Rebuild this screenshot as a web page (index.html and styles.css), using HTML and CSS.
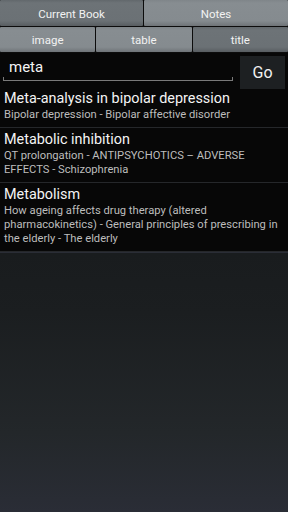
FILE: index.html
```html
<!DOCTYPE html>
<html>
<head>
<meta charset="utf-8">
<link rel="stylesheet" href="styles.css">
</head>
<body>
<div class="app">
  <div class="tabs tabs-top">
    <div class="tab dark">Current Book</div>
    <div class="tab">Notes</div>
  </div>
  <div class="tabs tabs-second">
    <div class="tab">image</div>
    <div class="tab">table</div>
    <div class="tab dark">title</div>
  </div>
  <div class="search">
    <div class="field"><span class="query">meta</span></div>
    <div class="go">Go</div>
  </div>
  <div class="list">
    <div class="item">
      <div class="title">Meta-analysis in bipolar depression</div>
      <div class="sub">Bipolar depression - Bipolar affective disorder</div>
    </div>
    <div class="item">
      <div class="title">Metabolic inhibition</div>
      <div class="sub">QT prolongation - ANTIPSYCHOTICS – ADVERSE EFFECTS - Schizophrenia</div>
    </div>
    <div class="item">
      <div class="title">Metabolism</div>
      <div class="sub">How ageing affects drug therapy (altered pharmacokinetics) - General principles of prescribing in the elderly - The elderly</div>
    </div>
  </div>
</div>
</body>
</html>
```
FILE: styles.css
```css
html, body {
  margin: 0;
  padding: 0;
}
body {
  width: 288px;
  height: 512px;
  overflow: hidden;
  font-family: Roboto, "Liberation Sans", sans-serif;
  background: linear-gradient(to bottom, #191c1e 0px, #1b1e20 60px, #23272a 180px, #2a2d36 259px);
  background-color: #2a2d36;
  background-repeat: no-repeat;
  background-position: 0 253px;
  background-size: 288px 259px;
}
.app {
  width: 288px;
}
.tabs {
  display: flex;
  gap: 1px;
  background: #0c0c0c;
}
.tabs-top {
  height: 26px;
  padding-bottom: 1px;
}
.tabs-second {
  height: 25px;
  padding-bottom: 1px;
}
.tab {
  flex: 1;
  display: flex;
  align-items: center;
  justify-content: center;
  padding-top: 1px;
  color: #f2f2f2;
  font-size: 11.5px;
  background: linear-gradient(to bottom, #7f8589 0px, #878d91 3px, #858b8f 80%, #6f7478 100%);
  border-radius: 1px;
}
.tab.dark {
  background: linear-gradient(to bottom, #62686c 0px, #6d7377 3px, #6b7175 80%, #585d61 100%);
}
.tabs-top .tab:first-child {
  flex: 0 0 143px;
}
.search {
  height: 34px;
  display: flex;
  align-items: flex-start;
  background: #070707;
}
.field {
  width: 230px;
  margin-left: 3px;
  height: 27px;
  border-bottom: 1px solid #7a7a7a;
  position: relative;
  display: flex;
  align-items: flex-end;
}
.field::before,
.field::after {
  content: "";
  position: absolute;
  bottom: 0;
  width: 1px;
  height: 3px;
  background: #7a7a7a;
}
.field::before { left: 0; }
.field::after { right: 0; }
.query {
  color: #f4f4f4;
  font-size: 15px;
  line-height: 18px;
  padding-left: 6px;
  padding-bottom: 4px;
}
.go {
  margin-left: 7px;
  margin-top: 3px;
  width: 45px;
  height: 33px;
  background: #1d2022;
  color: #f2f2f2;
  font-size: 16px;
  display: flex;
  align-items: center;
  justify-content: center;
  position: relative;
  z-index: 1;
}
.list {
  background: #070707;
}
.item {
  padding: 3px 4px 5px 4px;
  border-bottom: 1px solid #25272a;
}
.title {
  color: #f4f4f4;
  font-size: 14.4px;
  line-height: 18px;
}
.sub {
  color: #bdbdbd;
  font-size: 11.2px;
  line-height: 14px;
}
```
